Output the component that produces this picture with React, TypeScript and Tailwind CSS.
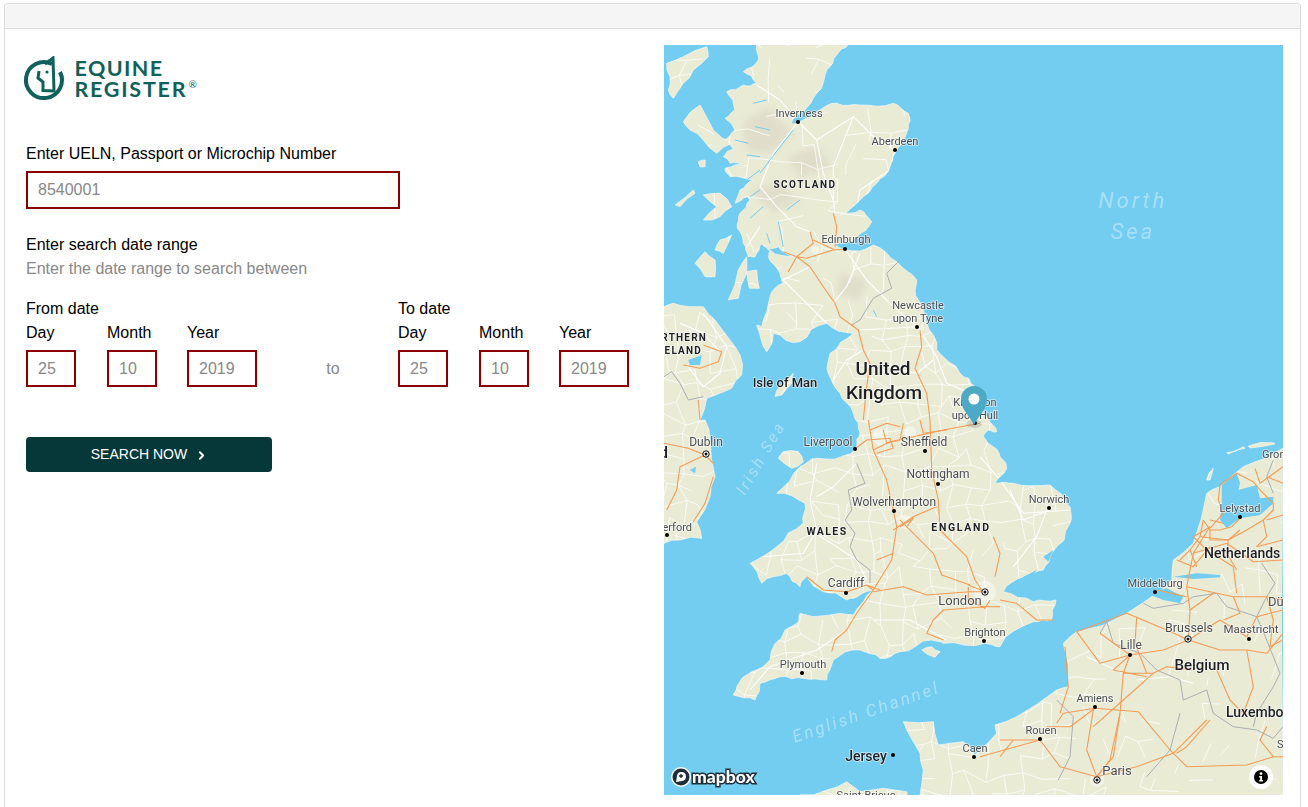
import { ChevronRight } from "lucide-react";

// map drawing: outlines were traced from crops of the map, each with its own origin
const shift = (ox: number, oy: number, s: string) =>
  s.trim().split(/\s+/).map((p) => {
    const [x, y] = p.split(",").map(Number);
    return `${(ox + x / 3).toFixed(1)},${(oy + y / 3).toFixed(1)}`;
  }).join(" ");
const a = (s: string) => shift(660, 40, s);
const b = (s: string) => shift(660, 420, s);
const c = (s: string) => shift(980, 380, s);
const d = (s: string) => shift(1160, 440, s);

const WATER = "#72cdf1";
const LAND = "#e9ebd5";

// small seeded generator so the picture is the same on every load
let seed = 1337;
const rnd = () => {
  seed = (seed * 16807) % 2147483647;
  return seed / 2147483647;
};

// breaks up straight coast edges
function rough(pts: string, rounds = 2, amount = 0.13) {
  let list = pts.split(" ").map((p) => p.split(",").map(Number));
  for (let r = 0; r < rounds; r++) {
    const next: number[][] = [];
    list.forEach((p, i) => {
      const q = list[(i + 1) % list.length];
      const dx = q[0] - p[0];
      const dy = q[1] - p[1];
      const k = (rnd() - 0.5) * 2 * amount;
      next.push(p);
      if (Math.hypot(dx, dy) > 3) next.push([(p[0] + q[0]) / 2 - dy * k, (p[1] + q[1]) / 2 + dx * k]);
    });
    list = next;
  }
  return list.map((p) => `${p[0].toFixed(1)},${p[1].toFixed(1)}`).join(" ");
}

const britain = [
  a("290,15 565,15 530,45 500,90 470,160 430,215 395,240 420,245 470,215 530,190 600,195 700,190 745,220 745,265 705,340 690,380 650,430 600,480 540,525 600,510 635,545 590,590 520,615 555,630 640,615 710,665 770,720 775,780 800,850 830,930 900,1000 945,1040"),
  c("0,50 25,115 50,155 25,150 10,170 40,200 70,240 80,265 45,310 100,310 210,315 270,380 270,430 215,520 190,570 130,590 70,635 160,665 228,660 215,720 160,725 60,800"),
  b("975,670 850,670 815,660 720,695 660,715 600,690 520,720 500,780 430,775 360,770 300,790 285,840 220,825 230,800 330,720 375,630 415,605 420,580 580,585 640,510 600,525 560,540 490,515 440,470 420,500 380,460 305,490 270,430 350,380 430,310 435,250 350,220 420,140 470,115 575,100 590,80 600,40"),
  a("580,1120 540,1060 505,1000 510,940 580,880 500,850 420,905 340,880 320,935 290,855 305,860 330,770 370,730 360,700 325,650 330,630 400,650 355,620 325,630 305,610 285,650 265,650 250,610 232,565 240,520 270,480 262,470 225,490 240,450 280,420 210,410 195,385 260,380 210,370 190,350 220,325 190,300 225,270 195,235 225,210 200,155 250,135 290,130 250,95 295,60"),
].join(" ");

const ireland = [
  a("12,800 40,790 90,800 130,800 165,840 210,900 240,945 245,1005 215,1045 140,1075 120,1140"),
  b("135,0 150,60 165,170 150,230 110,305 125,355 60,360 12,370"),
].join(" ");

const continent = [
  b("780,1125 790,1050 780,1000 740,930 730,905 820,905 835,975 910,965 945,1005"),
  c("0,1110 50,1060 45,1035 110,1010 230,930 265,920 250,790 290,755 440,700 530,640 575,600 580,540 640,490 680,340 720,320 790,260 870,230 909,205 909,1245"),
  b("780,1125"),
].join(" ");

const land = [
  rough(britain),
  rough(ireland, 1, 0.1),
  rough(continent, 1, 0.06),
  ...[
    a("20,70 70,50 140,20 145,50 100,90 70,130 40,175 25,150 30,110"),
    a("70,245 120,195 160,270 215,310 170,340 130,300 90,270"),
    a("115,365 135,360 135,380 120,380"),
    a("130,465 180,460 215,500 180,530 130,540 170,500"),
    a("45,495 100,450 105,460 60,500"),
    a("180,600 215,585 190,640 165,630"),
    a("105,670 135,635 165,660 165,710 135,710"),
    a("260,650 235,690 205,780 235,775 260,700"),
    a("260,695 290,690 298,745 268,745"),
    a("345,1070 365,1030 400,1000 395,1030 365,1065"),
    b("370,95 415,95 430,125 395,145 355,115"),
    b("785,690 815,680 840,695 825,712"),
    b("420,1125 500,1110 560,1085 600,1115 740,1115 740,1125"),
    d("140,120 160,85 150,120"),
    d("200,38 250,20 255,25 205,42"),
    d("265,18 340,8 345,12 270,24"),
  ].map((p) => rough(p, 1, 0.1)),
];

const lakes = [
  d("185,135 230,100 240,130 235,150 290,135 300,175 340,170 340,190 300,225 240,235 200,265 180,240 185,190"),
  c("500,640 560,625 610,650 600,670 550,660"),
  c("580,590 650,580 720,585 720,592 640,597"),
  a("85,960 125,945 120,975 90,975"),
  a("400,240 420,240 420,250 395,250"),
  b("90,150 108,140 105,160"),
  c("130,590 170,570 150,600"),
  c("190,530 220,510 205,545"),
];

const hills = [
  a("250,250 320,200 400,280 330,340 260,330"),
  a("380,350 470,320 520,380 420,410"),
  a("270,450 360,430 420,480 340,520"),
  a("540,700 620,720 600,780 530,760"),
];

const lochs = [
  a("300,400 345,340 400,270"),
  a("300,390 260,420"),
  a("355,545 370,620"),
  a("285,260 330,270"),
  a("260,345 300,350"),
  a("420,480 380,510"),
  a("300,450 270,470"),
  a("280,190 320,180"),
  a("320,580 330,610"),
  a("225,300 265,310"),
  a("270,535 310,500"),
  a("640,810 650,830"),
];

const whiteRoads = [
  a("415,245 470,300 490,400 520,480 525,520"),
  a("415,245 340,340 300,440 350,500 410,560 450,575"),
  a("705,330 690,390 600,450 590,500"),
  a("470,300 580,230 640,290 705,330"),
  a("580,230 520,380 520,480"),
  a("555,628 620,720 700,800 772,860"),
  a("450,680 370,720 420,770 500,850"),
  a("600,640 560,740 520,790"),
  a("600,870 772,860 830,950"),
  a("290,135 360,180 415,245"),
  a("235,660 300,560"),
  a("130,820 200,920 180,1000 130,1040 80,975"),
  a("60,850 130,880 180,935"),
  a("520,1020 560,960 610,930"),
  a("830,950 860,1030 930,1060"),
  a("680,980 770,1000 820,960"),
  b("470,130 450,240 470,330 430,400 310,410"),
  b("590,130 520,200 470,230"),
  b("450,330 530,380 590,420 620,480"),
  b("640,600 750,600 860,660"),
  b("560,630 470,690 330,740 270,810"),
  c("0,230 60,300 130,400 270,390"),
  c("90,330 130,420 210,390"),
  c("200,390 170,470 100,560"),
  c("320,830 430,880"),
  c("470,900 570,890 640,910"),
];

const borders = [
  a("12,1010 35,995 60,1030 85,1080 130,1070"),
  a("715,665 680,700 695,745 640,775 600,840 575,855"),
  b("590,130 615,190 565,210 575,270 555,300 585,340 570,380 590,420 630,450 630,490"),
  c("490,670 520,685 610,670 640,650 710,640 740,680 830,710 860,780 900,880 880,920 830,1000 820,1040"),
  c("380,725 400,790 480,820 530,870 600,900 610,960 680,930 700,1000 760,1040 830,1050 880,1075 909,1040"),
  c("845,550 885,610 860,650 830,710"),
  c("880,240 860,290 880,340"),
  c("230,960 280,1010 270,1130 235,1200"),
  c("600,1000 570,1110 500,1190"),
  c("380,725 360,760"),
];

const motorways = [
  a("370,635 410,650 440,655 520,630 555,628"),
  a("410,650 450,680 490,740 525,790 540,830 595,870 610,930 630,970 620,1040 610,1140"),
  a("520,520 530,560 525,620"),
  a("450,575 460,610 410,650"),
  a("460,600 525,630"),
  a("410,650 385,695"),
  a("780,870 785,920 765,985 800,1060 810,1140"),
  a("130,915 185,935 175,965 120,985 70,975"),
  a("115,1080 120,1140"),
  b("625,0 640,90 680,180 710,320 695,420 640,510 590,580 560,630 525,660 515,695"),
  b("640,515 730,500 800,525 930,515 975,515"),
  b("440,470 490,510 560,515 620,495 640,510"),
  b("810,0 815,150 835,240 840,330 920,410 945,480 965,510"),
  b("740,320 820,400 845,465 930,495"),
  b("975,560 850,570 820,600 800,640 850,660"),
  b("925,500 925,540 975,565 990,540"),
  b("640,90 690,65 760,50 850,30 960,10"),
  b("580,90 620,60 690,55 700,85 650,100"),
  b("630,30 680,10 720,20"),
  b("670,30 680,70 720,60 730,10"),
  b("780,0 790,40 860,30"),
  b("720,320 760,295 740,320 720,300"),
  b("700,330 760,290 830,260"),
  b("12,70 85,85 135,105 160,130"),
  b("135,105 60,140 50,210 20,270"),
  b("160,170 135,250 100,305"),
  b("650,420 700,400"),
  b("620,495 660,510"),
  b("975,515 925,495"),
  c("60,660 110,670 170,720 220,720"),
  c("45,590 60,520 40,470"),
  c("0,680 60,680"),
  c("350,1190 400,1130 420,1000 430,880 450,825"),
  c("345,985 475,995 570,1110 620,1160 800,1155 880,1130 909,1130"),
  c("350,1190 470,1160 580,1120 680,1020"),
  c("350,1190 240,1160 180,1080 60,1080"),
  c("180,1080 0,1130"),
  c("290,755 360,850 450,825 550,810 625,780"),
  c("345,985 250,1000 230,1030"),
  c("255,800 265,920 240,1000"),
  c("290,755 440,700 560,750 625,780"),
  c("625,780 630,690 620,620 640,520 690,440"),
  c("625,780 720,720 800,770"),
  c("800,810 720,810 625,780"),
  c("800,810 860,820 909,760"),
  c("800,770 830,710 909,690"),
  c("620,620 760,650 860,650 909,660"),
  c("640,520 740,490 820,545 909,540"),
  c("630,690 700,640"),
  c("690,440 640,470 680,510 760,560 770,640"),
  c("590,540 640,560 690,500"),
  c("530,630 620,650"),
  c("710,870 750,960 790,1000"),
  c("800,810 820,920 790,1000"),
  c("430,880 520,880 560,860 640,870"),
  c("520,880 430,960 340,1040"),
  c("690,1020 620,1100 590,1120"),
  c("340,990 320,1110 350,1190"),
  c("420,1000 390,1140 350,1190"),
  c("360,760 450,825"),
  c("450,825 400,870 500,890"),
  c("860,650 880,720 870,800 909,780"),
  c("860,1040 840,1080 880,1130"),
  c("760,650 780,700 730,720"),
  c("470,710 465,790 500,880"),
  c("200,1040 270,1040 345,985"),
  c("100,1080 60,1130"),
  d("130,240 150,270 180,270 215,260 240,235"),
  d("130,240 120,290 90,330 110,380"),
  d("150,270 150,300 205,300 240,270"),
  d("205,300 200,340 230,390"),
  d("180,135 175,180 190,220 150,265"),
  d("180,135 230,100 280,125 300,150 340,190 340,210 310,240 320,290 290,320"),
  d("285,85 300,130 369,80"),
  d("310,240 260,270 205,300"),
  d("320,240 369,225"),
  d("90,330 60,360"),
  d("120,290 205,300"),
  d("150,240 190,250"),
  d("320,110 369,130"),
  d("290,320 369,300"),
];

const cities = [
  [985, 592, 11], [880, 437, 8], [910, 432, 6], [905, 522, 7], [1097, 780, 7], [1188, 636, 5], [815, 250, 4],
];

// thin local roads, thrown over the land and cut to its outline
function buildMesh() {
  const step = 17;
  const cols = Math.ceil(619 / step) + 1;
  const rows = Math.ceil(750 / step) + 1;
  const nodes: number[][] = [];
  for (let r = 0; r < rows; r++)
    for (let k = 0; k < cols; k++)
      nodes.push([664 + k * step + (rnd() - 0.5) * 13, 45 + r * step + (rnd() - 0.5) * 13]);
  const segs: string[] = [];
  nodes.forEach((n, i) => {
    const chance = n[1] < 300 ? 0.28 : n[0] > 1060 ? 0.25 : 0.7;
    const right = nodes[i + 1];
    const down = nodes[i + cols];
    if (right && (i + 1) % cols !== 0 && rnd() < chance) segs.push(`M${n[0].toFixed(1)} ${n[1].toFixed(1)}L${right[0].toFixed(1)} ${right[1].toFixed(1)}`);
    if (down && rnd() < chance) segs.push(`M${n[0].toFixed(1)} ${n[1].toFixed(1)}L${down[0].toFixed(1)} ${down[1].toFixed(1)}`);
  });
  return segs.join("");
}
const mesh = buildMesh();

type Label = { t: string; x: number; y: number; s?: number; w?: number; ls?: number; anchor?: "start" | "middle" | "end"; dark?: boolean };

const labels: Label[] = [
  { t: "Inverness", x: 799, y: 117 },
  { t: "Aberdeen", x: 895, y: 145 },
  { t: "SCOTLAND", x: 805, y: 188, s: 10, w: 700, ls: 1.5, dark: true },
  { t: "Edinburgh", x: 846, y: 243 },
  { t: "Newcastle", x: 918, y: 309 },
  { t: "upon Tyne", x: 918, y: 322 },
  { t: "NORTHERN", x: 707, y: 341, s: 10, w: 700, ls: 1.2, anchor: "end", dark: true },
  { t: "IRELAND", x: 702, y: 354, s: 10, w: 700, ls: 1.2, anchor: "end", dark: true },
  { t: "United", x: 883, y: 375, s: 19, w: 500, dark: true },
  { t: "Kingdom", x: 884, y: 399, s: 19, w: 500, dark: true },
  { t: "Isle of Man", x: 785, y: 387, s: 13, w: 500, dark: true },
  { t: "Kingston", x: 975, y: 406 },
  { t: "upon Hull", x: 975, y: 419 },
  { t: "Ireland", x: 668, y: 458, s: 16, w: 500, anchor: "end", dark: true },
  { t: "Dublin", x: 706, y: 446, s: 12 },
  { t: "Liverpool", x: 828, y: 446, s: 12 },
  { t: "Sheffield", x: 924, y: 446, s: 12 },
  { t: "Nottingham", x: 938, y: 478, s: 12 },
  { t: "Wolverhampton", x: 894, y: 506, s: 12 },
  { t: "ENGLAND", x: 961, y: 531, s: 10.5, w: 700, ls: 1.7, dark: true },
  { t: "WALES", x: 827, y: 535, s: 10.5, w: 700, ls: 1.4, dark: true },
  { t: "Waterford", x: 692, y: 531, anchor: "end" },
  { t: "Cardiff", x: 846, y: 587, s: 12 },
  { t: "London", x: 960, y: 605, s: 13 },
  { t: "Brighton", x: 985, y: 636 },
  { t: "Plymouth", x: 803, y: 668 },
  { t: "Jersey", x: 866, y: 761, s: 14, w: 500, dark: true },
  { t: "Caen", x: 975, y: 752 },
  { t: "Saint-Brieuc", x: 866, y: 799 },
  { t: "Norwich", x: 1049, y: 503 },
  { t: "Lelystad", x: 1240, y: 512 },
  { t: "Groningen", x: 1262, y: 458, anchor: "start" },
  { t: "Netherlands", x: 1204, y: 558, s: 14, w: 500, anchor: "start", dark: true },
  { t: "Middelburg", x: 1155, y: 587 },
  { t: "Brussels", x: 1189, y: 632, s: 12.5 },
  { t: "Maastricht", x: 1251, y: 633, s: 11.5 },
  { t: "Belgium", x: 1202, y: 670, s: 15, w: 500, dark: true },
  { t: "Lille", x: 1131, y: 649, s: 12 },
  { t: "Amiens", x: 1095, y: 702 },
  { t: "Rouen", x: 1041, y: 734 },
  { t: "Paris", x: 1117, y: 775, s: 13 },
  { t: "Luxembourg", x: 1226, y: 717, s: 14, w: 500, anchor: "start", dark: true },
  { t: "Düsseldorf", x: 1268, y: 606, s: 13, anchor: "start" },
  { t: "Saar", x: 1277, y: 748, anchor: "start" },
];

const dots = [
  [798, 122], [895, 150], [845, 249], [917, 327], [975, 423], [855, 449], [925, 451], [938, 484], [894, 511],
  [667, 535], [846, 593], [984, 641], [802, 673], [893, 755], [974, 757], [1049, 508], [1240, 517], [1155, 592],
  [1249, 639], [1130, 655], [1095, 707], [1040, 739],
];
const capitals = [[706, 454], [985, 592], [1188, 639], [1097, 780]];

function MapPanel() {
  return (
    <div className="relative w-[619px] h-[750px] shrink-0 overflow-hidden bg-[#72cdf1]">
      <svg width="619" height="750" viewBox="664 45 619 750" className="block font-['Roboto',sans-serif]">
        <defs>
          <clipPath id="land-clip">
            {land.map((pts, i) => (
              <polygon key={i} points={pts} />
            ))}
          </clipPath>
          <filter id="soft">
            <feGaussianBlur stdDeviation="3" />
          </filter>
        </defs>
        <rect x="664" y="45" width="619" height="750" fill={WATER} />
        {land.map((pts, i) => (
          <polygon key={i} points={pts} fill={LAND} stroke="#f6f8f0" strokeWidth="0.7" />
        ))}
        <g clipPath="url(#land-clip)">
          <g filter="url(#soft)">
            {hills.map((pts, i) => (
              <polygon key={i} points={pts} fill="#dad6c4" opacity="0.6" />
            ))}
          </g>
          <path d={mesh} fill="none" stroke="#ffffff" strokeWidth="0.9" opacity="0.85" />
          {whiteRoads.map((pts, i) => (
            <polyline key={i} points={pts} fill="none" stroke="#ffffff" strokeWidth="1.1" strokeLinejoin="round" />
          ))}
          {cities.map(([x, y, r]) => (
            <circle key={`${x}-${y}`} cx={x} cy={y} r={r} fill="#ffffff" opacity="0.45" />
          ))}
        </g>
        {lakes.map((pts, i) => (
          <polygon key={i} points={pts} fill={WATER} />
        ))}
        {lochs.map((pts, i) => (
          <polyline key={i} points={pts} fill="none" stroke={WATER} strokeWidth="1" />
        ))}
        {borders.map((pts, i) => (
          <polyline key={i} points={pts} fill="none" stroke="#a9aeb3" strokeWidth="1" strokeLinejoin="round" />
        ))}
        {motorways.map((pts, i) => (
          <polyline key={i} points={pts} fill="none" stroke="#f39c57" strokeWidth="1.1" strokeLinejoin="round" />
        ))}

        <g fill="#ffffff" fillOpacity="0.38" fontStyle="italic">
          <text x="1133" y="208" textAnchor="middle" fontSize="22" letterSpacing="3">North</text>
          <text x="1133" y="239" textAnchor="middle" fontSize="22" letterSpacing="3">Sea</text>
          <text x="761" y="463" textAnchor="middle" fontSize="16" letterSpacing="2.5" transform="rotate(-60 761 458)">Irish Sea</text>
          <text x="866" y="718" textAnchor="middle" fontSize="17" letterSpacing="2.5" transform="rotate(-19 866 712)">English Channel</text>
        </g>

        {labels.map((l) => (
          <text
            key={l.t}
            x={l.x}
            y={l.y}
            textAnchor={l.anchor ?? "middle"}
            fontSize={l.s ?? 11}
            fontWeight={l.w ?? 400}
            letterSpacing={l.ls ?? 0}
            fill={l.dark ? "#1d1f22" : "#4a4d50"}
            stroke="#ffffff"
            strokeOpacity="0.65"
            strokeWidth="1.6"
            paintOrder="stroke"
          >
            {l.t}
          </text>
        ))}
        {dots.map(([x, y]) => (
          <circle key={`${x}-${y}`} cx={x} cy={y} r="2" fill="#000000" />
        ))}
        {capitals.map(([x, y]) => (
          <g key={`${x}-${y}`}>
            <circle cx={x} cy={y} r="3.2" fill="#ffffff" stroke="#111111" strokeWidth="1" />
            <circle cx={x} cy={y} r="1.5" fill="#111111" />
          </g>
        ))}

        {/* marker */}
        <ellipse cx="974" cy="424" rx="8" ry="4" fill="#555555" opacity="0.2" />
        <path d="M974 425 C970 416 961 410 961 399 A13 13 0 0 1 987 399 C987 410 978 416 974 425 Z" fill="#4caac6" />
        <circle cx="974" cy="399" r="5.5" fill="#ffffff" />
      </svg>

      <div className="absolute left-[6px] bottom-[7px] flex items-center">
        <svg width="22" height="22" viewBox="0 0 22 22">
          <circle cx="11" cy="11" r="10" fill="#ffffff" />
          <circle cx="11" cy="11" r="8.5" fill="#1f2f3a" />
          <path d="M6 16 L7 10 A4.5 4.5 0 1 1 12 15 Z" fill="#ffffff" />
          <path d="M11 8 V12 M9 10 H13" stroke="#1f2f3a" strokeWidth="1.4" />
        </svg>
        <span className="font-['Lato',sans-serif] text-[17.5px] leading-[22px] font-black text-white [-webkit-text-stroke:3px_#1f2f3a] [paint-order:stroke_fill]">
          mapbox
        </span>
      </div>
      <div className="absolute right-[10px] bottom-[6px] w-[24px] h-[24px] rounded-full bg-white flex items-center justify-center">
        <svg width="16" height="16" viewBox="0 0 16 16">
          <circle cx="8" cy="8" r="7" fill="#000000" />
          <circle cx="8" cy="4.6" r="1.4" fill="#ffffff" />
          <path d="M6.2 7 H9 V11 H10 V12.4 H6.2 V11 H7.2 V8.4 H6.2 Z" fill="#ffffff" />
        </svg>
      </div>
    </div>
  );
}

function DateField({ label, value, className }: { label: string; value: string; className: string }) {
  return (
    <div className="flex flex-col">
      <span className="h-6 leading-[26px]">{label}</span>
      <input
        placeholder={value}
        className={`mt-[6px] h-[37px] border-2 border-[#8b0000] pl-[10px] text-[16px] outline-none placeholder:text-[#888888] ${className}`}
      />
    </div>
  );
}

function DateGroup({ title, day, month, year }: { title: string; day: string; month: string; year: string }) {
  return (
    <div className="flex flex-col">
      <span className="h-6 leading-[26px]">{title}</span>
      <div className="flex">
        <DateField label="Day" value={day} className="w-[50px]" />
        <div className="ml-[31px]">
          <DateField label="Month" value={month} className="w-[50px]" />
        </div>
        <div className="ml-[30px]">
          <DateField label="Year" value={year} className="w-[70px]" />
        </div>
      </div>
    </div>
  );
}

function Logo() {
  return (
    <svg width="180" height="50" viewBox="20 56 180 50" className="-ml-[6px] block">
      <path d="M52 64 A18 18 0 1 0 60 72" fill="none" stroke="#10615a" strokeWidth="4" />
      <path d="M39 71 L38 78 L43 82 L43 90.5 L54 91 L53 58 L45 64" fill="none" stroke="#10615a" strokeWidth="3" />
      <circle cx="47" cy="72" r="1.6" fill="#10615a" />
      <g fill="#10615a" className="font-['Lato',sans-serif]" fontWeight="700">
        <text x="74.5" y="76" fontSize="21.5" letterSpacing="1.4">EQUINE</text>
        <text x="74.5" y="97" fontSize="21.5" letterSpacing="1.75">REGISTER</text>
        <text x="188.5" y="88" fontSize="10" fontWeight="400">®</text>
      </g>
    </svg>
  );
}

export default function App() {
  return (
    <div className="h-[807px] overflow-hidden bg-white pt-[3px] pl-[4px] pr-[7px] font-['Liberation_Sans',Arial,sans-serif] text-[16px] text-black">
      <div className="rounded-t-[4px] border border-b-0 border-[#dddddd] h-full">
        <div className="h-[25px] bg-[#f5f5f5] border-b border-[#dddddd] rounded-t-[4px]" />
        <div className="flex pt-4">
          <div className="w-[659px] shrink-0 pl-[21px]">
            <div className="h-[96px] pt-[11px]">
              <Logo />
            </div>

            <label className="block h-6 leading-[26px]">Enter UELN, Passport or Microchip Number</label>
            <input
              placeholder="8540001"
              className="mt-[6px] block w-[374px] h-[38px] border-2 border-[#8b0000] pl-[10px] text-[16px] outline-none placeholder:text-[#888888]"
            />

            <p className="mt-[23px] h-6 leading-[26px]">Enter search date range</p>
            <p className="h-6 leading-[26px] text-[#888888]">Enter the date range to search between</p>

            <div className="mt-4 flex items-start">
              <DateGroup title="From date" day="25" month="10" year="2019" />
              <span className="w-[141px] pt-[61px] pl-[11px] text-center leading-6 text-[#888888]">to</span>
              <DateGroup title="To date" day="25" month="10" year="2019" />
            </div>

            <button className="mt-[50px] flex h-[35px] w-[246px] items-center justify-center gap-[8px] rounded-[4px] bg-[#073839] pl-[1px] text-[14px] text-white">
              SEARCH NOW
              <ChevronRight size={13} strokeWidth={3.5} className="mt-[2px]" />
            </button>
          </div>
          <MapPanel />
        </div>
      </div>
    </div>
  );
}
